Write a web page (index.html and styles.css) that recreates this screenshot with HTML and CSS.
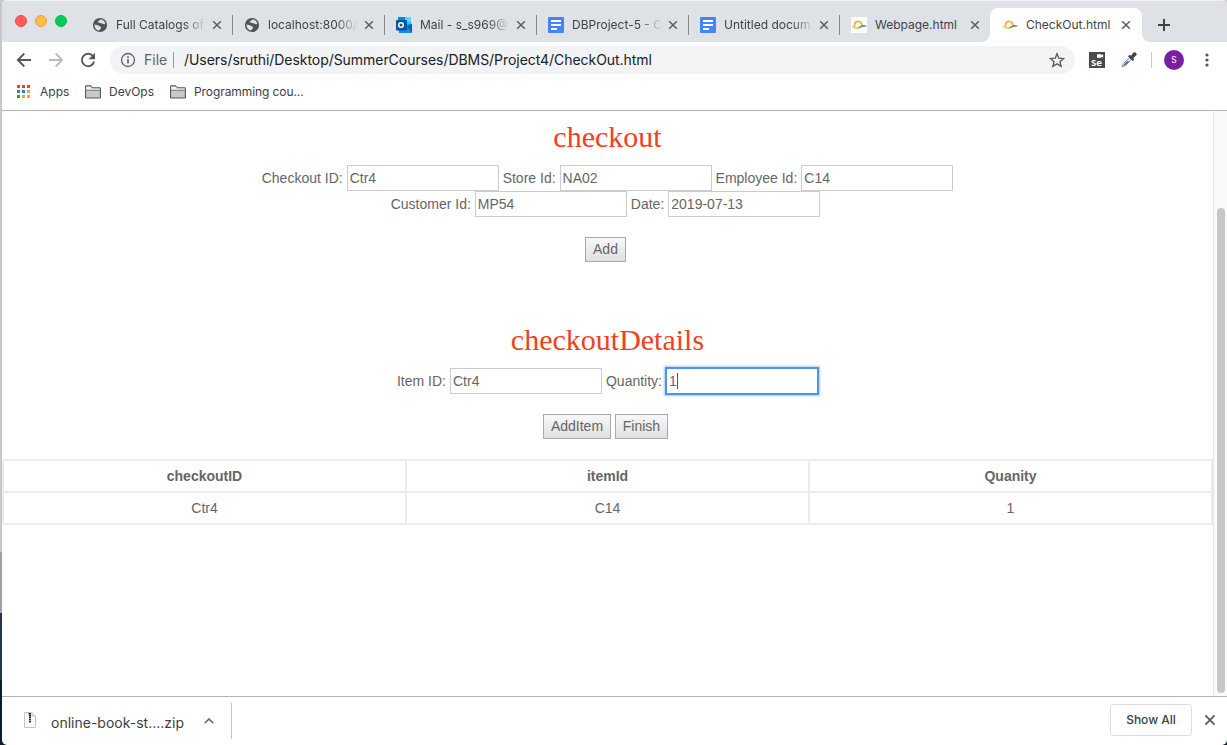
FILE: index.html
```html
<!DOCTYPE html>
<html lang="en">
<head>
<meta charset="utf-8">
<title>CheckOut.html</title>
<link rel="stylesheet" href="styles.css">
</head>
<body>
<svg class="defs" width="0" height="0" aria-hidden="true">
  <symbol id="globe" viewBox="0 0 16 16"><circle cx="8" cy="8" r="7.1" fill="#505357"/><path d="M2.500 7.400c1.800.6 3 .5 4.300 1.300 1 .7 2.200.6 2.300 1.800 0 1.100-1.300 1.300-1.700 3-2.900-.3-5.200-2.700-4.900-6.100zM5.500 5.200c.3-1.300 1.700-1.200 2.300-2.200.5-.6 1.700-.6 2.500-.3 1.500.7 2.700 2.200 3 4.200-1.200.7-2.100.3-3.100-.4-1.400-1-2.800.2-4.700-1.300z" fill="#dee1e6"/></symbol>
  <symbol id="close" viewBox="0 0 10 10"><path d="M1.200 1.200l7.600 7.600M8.800 1.200L1.200 8.800" stroke="#5a5d61" stroke-width="1.500" fill="none"/></symbol>
  <symbol id="docs" viewBox="0 0 16 16"><rect width="16" height="16" rx="1.300" fill="#4285f4"/><path d="M3 4h10M3 8h10M3 12h6" stroke="#fff" stroke-width="2"/></symbol>
  <symbol id="sun" viewBox="0 0 16 16"><rect width="16" height="16" fill="#fff"/><path d="M4 9.800A3.600 3.600 0 1 1 10.700 8" fill="none" stroke="#f7ab50" stroke-width="1.900"/><path d="M1.200 9c1.500 2.300 4.400 2.700 6.800.8" fill="none" stroke="#f3cd62" stroke-width="1.500"/><path d="M5.800 11.200c2.600-.3 3.300-3.200 6-3.300 1.500 0 2.200 1 4.200.6-1.500 2-3.200 1-4.900 1.500-1.900.6-3 1.900-5.300 1.200z" fill="#5b9445"/></symbol>
  <symbol id="folder" viewBox="0 0 16 14"><path d="M.6 12.400V1.700q0-.9.9-.9h4l1.500 1.900h7.500q.9 0 .9.900v8.800q0 .6-.6.6H1.200q-.6 0-.6-.6z" fill="#c9c9c9" stroke="#55585c" stroke-width="1.100"/><path d="M1.100 2.800h5.500M1.100 4.300h13.800" stroke="#fff" stroke-width="1.300"/><path d="M.8 5.200h14.400" stroke="#55585c" stroke-width=".8"/></symbol>
</svg>

<div class="window">
  <header class="tabstrip">
    <div class="lights"><i class="red"></i><i class="yellow"></i><i class="green"></i></div>
    <div class="tab"><svg class="fav"><use href="#globe"/></svg><span class="title fade">Full Catalogs of</span><svg class="x"><use href="#close"/></svg></div>
    <div class="tab"><svg class="fav"><use href="#globe"/></svg><span class="title fade">localhost:8000/</span><svg class="x"><use href="#close"/></svg></div>
    <div class="tab"><svg class="fav" viewBox="0 0 16 16"><path d="M2 0h13v8H2z" fill="#32bdf0"/><path d="M2 0h7v5H2z" fill="#0a84dc"/><path d="M9 0h6v5H9z" fill="#50d9ff"/><path d="M2 8l14-1v9H3z" fill="#1490df"/><path d="M11 9.500l5-3V16z" fill="#0a63ae"/><rect y="3" width="11" height="10.500" rx=".8" fill="#0a56a6"/><circle cx="5" cy="8" r="2.300" fill="none" stroke="#fff" stroke-width="1.500"/></svg><span class="title fade">Mail - s_s969@</span><svg class="x"><use href="#close"/></svg></div>
    <div class="tab"><svg class="fav"><use href="#docs"/></svg><span class="title fade">DBProject-5 - C</span><svg class="x"><use href="#close"/></svg></div>
    <div class="tab short"><svg class="fav"><use href="#docs"/></svg><span class="title fade">Untitled docum</span><svg class="x"><use href="#close"/></svg></div>
    <div class="tab last"><svg class="fav"><use href="#sun"/></svg><span class="title">Webpage.html</span><svg class="x"><use href="#close"/></svg></div>
    <div class="tab active"><svg class="fav"><use href="#sun"/></svg><span class="title">CheckOut.html</span><svg class="x"><use href="#close"/></svg></div>
    <svg class="plus" viewBox="0 0 14 14"><path d="M7 1v12M1 7h12" stroke="#3c4043" stroke-width="2"/></svg>
  </header>

  <div class="toolbar">
    <svg class="nav" viewBox="0 0 16 16"><path d="M15 8H2M8.300 1.500L1.800 8l6.500 6.500" fill="none" stroke="#55585c" stroke-width="1.800"/></svg>
    <svg class="nav" viewBox="0 0 16 16"><path d="M1 8h13M7.700 1.500L14.200 8l-6.500 6.500" fill="none" stroke="#babcbe" stroke-width="1.800"/></svg>
    <svg class="nav" viewBox="0 0 16 16"><path d="M13 4.200A6.200 6.200 0 1 0 14.100 9.500" fill="none" stroke="#55585c" stroke-width="1.900"/><path d="M15 .8v6.500H8.500z" fill="#55585c"/></svg>
    <div class="omnibox">
      <svg class="info" viewBox="0 0 16 16"><circle cx="8" cy="8" r="6.500" fill="none" stroke="#5f6368" stroke-width="1.300"/><path d="M8 7v4.500M8 4.300v1.600" stroke="#5f6368" stroke-width="1.600"/></svg>
      <span class="file">File</span>
      <span class="url">/Users/sruthi/Desktop/SummerCourses/DBMS/Project4/CheckOut.html</span>
      <svg class="star" viewBox="0 0 16 16"><path d="M8 1.800l1.800 4.400 4.800.4-3.600 3.100 1.100 4.700L8 11.900l-4.100 2.500L5 9.700 1.400 6.600l4.800-.4z" fill="none" stroke="#5a5d61" stroke-width="1.400"/></svg>
    </div>
    <div class="se"><svg viewBox="0 0 8 4"><path d="M0 0h5v1.200L7 .2v3.400L5 2.800V4H0z" fill="#fff"/></svg><span>Se</span></div>
    <svg class="dropper" viewBox="0 0 16 16"><path d="M1 15l1.300-3.300 6.500-6.500 2 2L4.300 13.700z" fill="#dbe5f5" stroke="#8b8d92" stroke-width=".9"/><path d="M2.500 13.500l.8-1.600L6 9.300l2.600.1-4.400 3.900z" fill="#2768dc"/><path d="M7 4.200l1.500-1.500 1.600 1L12.200.7c1.800-1.600 4.700 1 2.900 2.900l-2.800 2.300.9 1.700-1.500 1.500z" fill="#444345"/></svg>
    <span class="rule"></span>
    <span class="avatar">S</span>
    <svg class="dots" viewBox="0 0 4 14"><g fill="#505357"><circle cx="2" cy="2" r="1.600"/><circle cx="2" cy="7" r="1.600"/><circle cx="2" cy="12" r="1.600"/></g></svg>
  </div>

  <nav class="bookmarks">
    <svg class="apps" viewBox="0 0 13 13"><path d="M0 0h3v3H0zM5 0h3v3H5zM10 0h3v3h-3z" fill="#ea3d33"/><path d="M0 5h3v3H0zM0 10h3v3H0z" fill="#259b59"/><path d="M5 5h3v3H5z" fill="#1a82f0"/><path d="M10 5h3v3h-3zM5 10h3v3H5zM10 10h3v3h-3z" fill="#f3a13a"/></svg>
    <span class="b1">Apps</span>
    <svg class="folder"><use href="#folder"/></svg><span class="b2">DevOps</span>
    <svg class="folder"><use href="#folder"/></svg><span class="b3">Programming cou...</span>
  </nav>

  <div class="viewport">
    <main class="page">
      <h1>checkout</h1>
      <div class="row"><label>Checkout ID:</label><input value="Ctr4"><label>Store Id:</label><input value="NA02"><label>Employee Id:</label><input value="C14"></div>
      <div class="row shift"><label>Customer Id:</label><input value="MP54"><label>Date:</label><input value="2019-07-13"></div>
      <div class="buttons"><button class="add">Add</button></div>
      <h1 class="second">checkoutDetails</h1>
      <div class="row"><label>Item ID:</label><input value="Ctr4"><label>Quantity:</label><div class="focus">1<i class="caret"></i></div></div>
      <div class="buttons"><button class="additem">AddItem</button><button class="finish">Finish</button></div>
      <table>
        <tr><th>checkoutID</th><th>itemId</th><th>Quanity</th></tr>
        <tr><td>Ctr4</td><td>C14</td><td>1</td></tr>
      </table>
    </main>
    <div class="scroll"><div class="thumb"></div></div>
  </div>

  <footer class="downloads">
    <svg class="zip" viewBox="0 0 12 16"><path d="M.5.500H8L11.500 4v11.500H.5z" fill="#fafafa" stroke="#c4c4c4"/><path d="M8 .5V4h3.500" fill="#eee" stroke="#c4c4c4"/><path d="M6 1v10" stroke="#333" stroke-width="2" stroke-dasharray="1.500 .5"/><path d="M4.500 1h2v5h-1V2.500h-1z" fill="#333"/></svg>
    <span class="fname">online-book-st....zip</span>
    <svg class="chev" viewBox="0 0 10 6"><path d="M.7 5.300L5 1l4.300 4.300" fill="none" stroke="#5f6368" stroke-width="1.500"/></svg>
    <span class="drule"></span>
    <span class="showall">Show All</span>
    <svg class="dclose"><use href="#close"/></svg>
  </footer>
</div>
</body>
</html>
```
FILE: styles.css
```css
* { box-sizing: border-box; }
body {
  margin: 0; width: 1227px; height: 745px; overflow: hidden; padding-left: 2px;
  background: linear-gradient(#c6c8ca 0 552px, #a0a0a0 552px 613px, #28324a 613px 680px, #0f1c30 680px);
  font-family: Inter, "Liberation Sans", sans-serif;
}
.defs { position: absolute; }
svg { display: block; flex: none; }
.window { display: flex; flex-direction: column; height: 745px; background: #fff; border-radius: 5px; overflow: hidden; }

.tabstrip { height: 42px; background: #dee1e6; border-top: 1px solid #eef3f5; display: flex; padding-top: 7px; }
.lights { width: 78px; display: flex; gap: 8px; padding: 7px 0 0 13px; }
.lights i { width: 12px; height: 12px; border-radius: 50%; border: 1px solid; }
.lights .red { background: #ff5c5a; border-color: #e84b48; }
.lights .yellow { background: #ffbc4b; border-color: #e5a436; }
.lights .green { background: #04ca57; border-color: #08b34c; }
.tab { width: 152px; height: 34px; padding-left: 12px; display: flex; align-items: center; position: relative; font-size: 12px; color: #3f4347; }
.tab:not(.last):not(.active)::after { content: ""; position: absolute; right: -1px; top: 7px; width: 1px; height: 20px; background: #85888d; }
.fav { width: 16px; height: 16px; margin-right: 8px; }
.title { width: 90px; white-space: nowrap; overflow: hidden; line-height: 18px; }
.fade { -webkit-mask-image: linear-gradient(90deg, #000 68px, transparent 90px); mask-image: linear-gradient(90deg, #000 68px, transparent 90px); }
.x { width: 10px; height: 10px; margin-left: 6px; }
.tab.short { width: 151px; }
.tab.short .x, .last .x, .active .x { margin-left: 5px; }
.tab.last { width: 151px; padding-left: 12px; }
.active { background: #fff; border-radius: 8px 8px 0 0; }
.active::before, .active::after { content: ""; position: absolute; bottom: 0; width: 8px; height: 8px; }
.active::before { left: -8px; background: radial-gradient(circle at 0 0, transparent 7.5px, #fff 8px); }
.active::after { right: -8px; background: radial-gradient(circle at 100% 0, transparent 7.5px, #fff 8px); }
.plus { width: 14px; height: 14px; margin: 10px 0 0 15px; }

.toolbar { height: 36px; display: flex; align-items: center; padding-left: 14px; }
.nav { width: 16px; height: 16px; margin-right: 16px; }
.omnibox { width: 965px; height: 28px; margin-left: -2px; border-radius: 14px; background: #f1f3f4; display: flex; align-items: center; padding-left: 10px; }
.info { width: 16px; height: 16px; margin-right: 8px; }
.file { width: 30px; height: 16px; line-height: 16px; border-right: 1px solid #96999c; font-size: 14px; color: #606468; }
.url { margin-left: 10px; font-size: 14px; line-height: 16px; letter-spacing: -.048px; color: #202124; width: 865px; white-space: nowrap; }
.star { width: 16px; height: 16px; }
.se { width: 16px; height: 16px; margin-left: 14px; background: #4b4b4b; color: #fff; font: bold 9.5px/9px "Open Sans", sans-serif; display: flex; flex-direction: column; padding: 2px 0 0 2px; }
.se svg { width: 7px; height: 4px; margin-left: 6px; }
.dropper { width: 16px; height: 16px; margin-left: 16px; }
.rule { width: 1px; height: 16px; background: #caccce; margin-left: 14px; }
.avatar { width: 20px; height: 20px; margin-left: 12px; border-radius: 50%; background: #7b1fa2; color: #fff; font-size: 8.5px; line-height: 20px; text-align: center; }
.dots { width: 4px; height: 14px; margin-left: 20.5px; }

.bookmarks { height: 33px; border-bottom: 1px solid #b4b4b4; display: flex; align-items: center; padding: 0 0 5px 15px; font-size: 12px; color: #3c4043; white-space: nowrap; }
.apps { width: 13px; height: 13px; margin-right: 10px; }
.folder { width: 16px; height: 14px; margin-right: 8px; }
.b1, .b2, .b3 { margin-top: -1px; }
.b1 { width: 45px; }
.b2 { width: 61px; }
.b3 { letter-spacing: -.08px; }

.viewport { height: 585px; display: flex; }
.page { width: 1211px; font: 14px/18px "Liberation Sans", Arial, sans-serif; color: #666; }
h1 { margin: 0; padding-top: 8px; height: 54px; font: 30px/36px "Liberation Serif", "Times New Roman", serif; color: #f4401f; text-align: center; }
.row { height: 26px; display: flex; justify-content: center; align-items: center; gap: 4px; }
.shift { padding-right: 4px; }
.row input, .focus { width: 152px; height: 26px; border: 1px solid #ccc; padding: 0 2px; font: inherit; color: #666; background: #fff; border-radius: 0; }
.row .focus { line-height: 24px; border-color: #4e93e8; box-shadow: 0 0 0 1px #4f94ea, 0 0 2px 2px #a9ccf7; display: flex; align-items: center; }
.caret { width: 1px; height: 16px; background: #555; }
.buttons { height: 25px; margin-top: 20px; display: flex; justify-content: center; gap: 4px; padding-right: 4px; }
button { height: 25px; padding: 0 0 2px; border: 1px solid #a9a9a9; background: linear-gradient(#f8f8f8, #e0e0e0); font: inherit; color: #666; }
.add { width: 41px; }
.additem { width: 68px; }
.finish { width: 53px; }
.second { margin-top: 52px; }
table { width: 1211px; margin-top: 20px; border-collapse: collapse; table-layout: fixed; }
th, td { height: 32px; padding: 0; border: 2px solid #ebebeb; text-align: center; }
.scroll { width: 14px; background: #fafafa; border-left: 1px solid #e7e7e7; padding: 97px 0 0 3px; }
.thumb { width: 8px; height: 485px; border-radius: 4px; background: #c7c7c7; }

.downloads { height: 49px; border-top: 1px solid #b4b4b4; display: flex; align-items: center; color: #3c4043; }
.zip { width: 12px; height: 16px; margin: 0 15px 2px 22px; }
.fname { width: 153px; font-size: 14px; padding-top: 2px; white-space: nowrap; }
.chev { width: 10px; height: 6px; }
.drule { width: 1px; height: 36px; margin-left: 17px; background: #c4c4c4; }
.showall { width: 82px; height: 32px; margin: 0 0 2px 878px; border: 1px solid #dadce0; border-radius: 4px; text-align: center; font-size: 12px; font-weight: 500; line-height: 30px; }
.dclose { width: 12px; height: 12px; margin: 0 0 2px 12px; }
.dclose use { width: 12px; height: 12px; }
```
